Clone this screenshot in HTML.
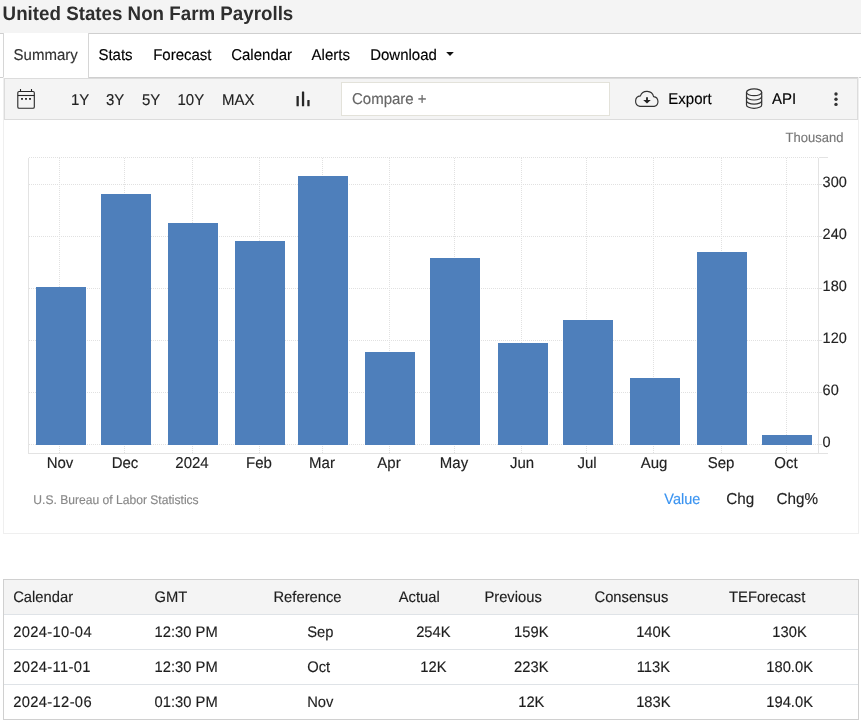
<!DOCTYPE html>
<html><head><meta charset="utf-8">
<style>
html,body{margin:0;padding:0;}
body{width:861px;height:722px;overflow:hidden;position:relative;background:#fff;font-family:"Liberation Sans", sans-serif;}
.t{position:absolute;white-space:nowrap;line-height:1;text-rendering:geometricPrecision;}
#tx{position:absolute;left:0;top:0;width:861px;height:722px;will-change:transform;}
.box{position:absolute;box-sizing:border-box;}
</style></head><body>
<div class="box" style="left:0;top:0;width:861px;height:33px;background:#f4f4f4;"></div><div class="box" style="left:0;top:33px;width:861px;height:1px;background:#cfcfcf;"></div><div class="box" style="left:0;top:77px;width:861px;height:1px;background:#cfcfcf;"></div><div class="box" style="left:3px;top:33px;width:86px;height:45px;background:#fff;border-left:1px solid #d6d6d6;border-right:1px solid #d6d6d6;"></div><div class="box" style="left:3px;top:77px;width:856px;height:457px;border:1px solid #efefef;border-top:none;"></div><div class="box" style="left:4px;top:78px;width:854px;height:42px;background:#f4f4f4;border:1px solid #dcdcdc;"></div><div class="box" style="left:341px;top:82px;width:269px;height:34px;background:#fff;border:1px solid #e3e2da;"></div><div class="box" style="left:3px;top:579px;width:856px;height:141px;border:1px solid #d0d0d0;"></div><div class="box" style="left:4px;top:580px;width:854px;height:34px;background:#f4f4f4;"></div><div class="box" style="left:4px;top:614px;width:854px;height:1px;background:#dfe3e7;"></div><div class="box" style="left:4px;top:649px;width:854px;height:1px;background:#dfe3e7;"></div><div class="box" style="left:4px;top:684px;width:854px;height:1px;background:#dfe3e7;"></div><div id="tx"><div class="t" style="left:2.60px;top:5px;font-size:18.75px;color:#2e2e2e;font-weight:bold;transform:scaleY(1.04);transform-origin:0 15.87px;">United States Non Farm Payrolls</div>
<div class="t" style="left:13.60px;top:48px;font-size:15px;color:#333;-webkit-text-stroke:0.15px #333;transform:scaleY(1.04);transform-origin:0 12.70px;">Summary</div>
<div class="t" style="left:98.40px;top:48px;font-size:15px;color:#000;-webkit-text-stroke:0.15px #000;transform:scaleY(1.04);transform-origin:0 12.70px;">Stats</div>
<div class="t" style="left:153.20px;top:48px;font-size:15px;color:#000;-webkit-text-stroke:0.15px #000;transform:scaleY(1.04);transform-origin:0 12.70px;">Forecast</div>
<div class="t" style="left:231.20px;top:48px;font-size:15px;color:#000;-webkit-text-stroke:0.15px #000;transform:scaleY(1.04);transform-origin:0 12.70px;">Calendar</div>
<div class="t" style="left:311.60px;top:48px;font-size:15px;color:#000;-webkit-text-stroke:0.15px #000;transform:scaleY(1.04);transform-origin:0 12.70px;">Alerts</div>
<div class="t" style="left:370.20px;top:48px;font-size:15px;color:#000;-webkit-text-stroke:0.15px #000;transform:scaleY(1.04);transform-origin:0 12.70px;">Download</div>
<svg class="box" style="left:446px;top:51px" width="9" height="6"><path d="M0.2 1 L7.8 1 L4 4.9 Z" fill="#111"/></svg><div class="t" style="left:71.00px;top:93px;font-size:15px;color:#222;-webkit-text-stroke:0.15px #222;transform:scaleY(1.04);transform-origin:0 12.70px;">1Y</div>
<div class="t" style="left:106.00px;top:93px;font-size:15px;color:#222;-webkit-text-stroke:0.15px #222;transform:scaleY(1.04);transform-origin:0 12.70px;">3Y</div>
<div class="t" style="left:142.00px;top:93px;font-size:15px;color:#222;-webkit-text-stroke:0.15px #222;transform:scaleY(1.04);transform-origin:0 12.70px;">5Y</div>
<div class="t" style="left:177.50px;top:93px;font-size:15px;color:#222;-webkit-text-stroke:0.15px #222;transform:scaleY(1.04);transform-origin:0 12.70px;">10Y</div>
<div class="t" style="left:222.00px;top:93px;font-size:15px;color:#222;-webkit-text-stroke:0.15px #222;transform:scaleY(1.04);transform-origin:0 12.70px;">MAX</div>
<div class="t" style="left:352.00px;top:92px;font-size:15px;color:#666;-webkit-text-stroke:0.15px #666;transform:scaleY(1.04);transform-origin:0 12.70px;">Compare +</div>
<div class="t" style="left:668.30px;top:92px;font-size:15px;color:#000;-webkit-text-stroke:0.15px #000;transform:scaleY(1.04);transform-origin:0 12.70px;">Export</div>
<div class="t" style="left:772.00px;top:92px;font-size:15px;color:#000;-webkit-text-stroke:0.15px #000;transform:scaleY(1.04);transform-origin:0 12.70px;">API</div>
<svg class="box" style="left:0;top:0" width="861" height="130">
<g fill="none" stroke="#262626" stroke-width="1.1">
<rect x="17.8" y="91.5" width="16.5" height="16.7" rx="1.3"/>
<line x1="17.8" y1="95.5" x2="34.3" y2="95.5"/>
<line x1="20.5" y1="89" x2="20.5" y2="91.5"/>
<line x1="31.5" y1="89" x2="31.5" y2="91.5"/>
</g>
<g fill="#222"><rect x="21.1" y="98" width="1.8" height="1.8"/><rect x="25.1" y="98" width="1.8" height="1.8"/><rect x="29.1" y="98" width="1.8" height="1.8"/></g>
<g fill="#262626">
<rect x="296.5" y="96.1" width="2.3" height="10.2" rx="0.5"/>
<rect x="301.9" y="91.4" width="2.3" height="14.9" rx="0.5"/>
<rect x="307.3" y="100" width="2.3" height="6.3" rx="0.5"/>
</g>
<path d="M640 106.4 A5.3 5.3 0 0 1 640.4 95.9 A6.9 6.9 0 0 1 653.6 96.6 A5 5 0 0 1 654.2 106.4 Z" fill="none" stroke="#333" stroke-width="1.15"/>
<path d="M646.1 97.2 H647.9 V100 H650.8 L647 103.4 L643.2 100 H646.1 Z" fill="#222"/>
<g fill="none" stroke="#333" stroke-width="1.2">
<ellipse cx="754.1" cy="92.3" rx="7.6" ry="3.4"/>
<path d="M746.5 92.3 V104.9 A7.6 3.4 0 0 0 761.7 104.9 V92.3"/>
<path d="M746.5 96.6 A7.6 3.4 0 0 0 761.7 96.6"/>
<path d="M746.5 100.7 A7.6 3.4 0 0 0 761.7 100.7"/>
</g>
<g fill="#333"><circle cx="836" cy="94" r="1.7"/><circle cx="836" cy="99.2" r="1.7"/><circle cx="836" cy="104.4" r="1.7"/></g>
</svg><svg class="box" style="left:0;top:0" width="861" height="722">
<g stroke="#e1e1e1" stroke-width="1" stroke-dasharray="1 1">
<line x1="29" y1="157.5" x2="818" y2="157.5"/>
<line x1="29" y1="444.5" x2="818" y2="444.5"/>
<line x1="29" y1="392.5" x2="818" y2="392.5"/>
<line x1="29" y1="340.5" x2="818" y2="340.5"/>
<line x1="29" y1="288.5" x2="818" y2="288.5"/>
<line x1="29" y1="236.5" x2="818" y2="236.5"/>
<line x1="29" y1="184.5" x2="818" y2="184.5"/>
<line x1="59.5" y1="158" x2="59.5" y2="453"/>
<line x1="124.5" y1="158" x2="124.5" y2="453"/>
<line x1="192.5" y1="158" x2="192.5" y2="453"/>
<line x1="259.5" y1="158" x2="259.5" y2="453"/>
<line x1="322.5" y1="158" x2="322.5" y2="453"/>
<line x1="389.5" y1="158" x2="389.5" y2="453"/>
<line x1="454.5" y1="158" x2="454.5" y2="453"/>
<line x1="521.5" y1="158" x2="521.5" y2="453"/>
<line x1="586.5" y1="158" x2="586.5" y2="453"/>
<line x1="653.5" y1="158" x2="653.5" y2="453"/>
<line x1="721.5" y1="158" x2="721.5" y2="453"/>
<line x1="786.5" y1="158" x2="786.5" y2="453"/>
</g>
<g stroke="#e3e3e3" stroke-width="1">
<line x1="28.5" y1="158" x2="28.5" y2="454"/>
<line x1="818.5" y1="158" x2="818.5" y2="454"/>
<line x1="28" y1="453.5" x2="828" y2="453.5"/>
<line x1="819" y1="157.5" x2="828" y2="157.5"/>
<line x1="819" y1="444.5" x2="822" y2="444.5"/>
<line x1="819" y1="392.5" x2="822" y2="392.5"/>
<line x1="819" y1="340.5" x2="822" y2="340.5"/>
<line x1="819" y1="288.5" x2="822" y2="288.5"/>
<line x1="819" y1="236.5" x2="822" y2="236.5"/>
<line x1="819" y1="184.5" x2="822" y2="184.5"/>
</g>
<g fill="#4e7fbb" shape-rendering="crispEdges">
<rect x="36" y="287" width="50" height="158"/>
<rect x="101" y="194" width="50" height="251"/>
<rect x="168" y="223" width="50" height="222"/>
<rect x="235" y="241" width="50" height="204"/>
<rect x="298" y="176" width="50" height="269"/>
<rect x="365" y="352" width="50" height="93"/>
<rect x="430" y="258" width="50" height="187"/>
<rect x="498" y="343" width="50" height="102"/>
<rect x="563" y="320" width="50" height="125"/>
<rect x="630" y="378" width="50" height="67"/>
<rect x="697" y="252" width="50" height="193"/>
<rect x="762" y="435" width="50" height="10"/>
</g>
</svg><div class="t" style="left:822.60px;top:436px;font-size:14.5px;color:#222;-webkit-text-stroke:0.15px #222;transform:scaleY(1.04);transform-origin:0 12.27px;">0</div>
<div class="t" style="left:822.60px;top:384px;font-size:14.5px;color:#222;-webkit-text-stroke:0.15px #222;transform:scaleY(1.04);transform-origin:0 12.27px;">60</div>
<div class="t" style="left:822.60px;top:332px;font-size:14.5px;color:#222;-webkit-text-stroke:0.15px #222;transform:scaleY(1.04);transform-origin:0 12.27px;">120</div>
<div class="t" style="left:822.60px;top:280px;font-size:14.5px;color:#222;-webkit-text-stroke:0.15px #222;transform:scaleY(1.04);transform-origin:0 12.27px;">180</div>
<div class="t" style="left:822.60px;top:228px;font-size:14.5px;color:#222;-webkit-text-stroke:0.15px #222;transform:scaleY(1.04);transform-origin:0 12.27px;">240</div>
<div class="t" style="left:822.60px;top:176px;font-size:14.5px;color:#222;-webkit-text-stroke:0.15px #222;transform:scaleY(1.04);transform-origin:0 12.27px;">300</div>
<div class="t" style="left:785.60px;top:131px;font-size:13px;color:#777;-webkit-text-stroke:0.15px #777;transform:scaleY(1.04);transform-origin:0 11.00px;">Thousand</div>
<div class="t" style="left:-40.00px;width:200px;text-align:center;top:456px;font-size:15px;color:#222;-webkit-text-stroke:0.15px #222;transform:scaleY(1.04);transform-origin:0 12.70px;">Nov</div>
<div class="t" style="left:25.00px;width:200px;text-align:center;top:456px;font-size:15px;color:#222;-webkit-text-stroke:0.15px #222;transform:scaleY(1.04);transform-origin:0 12.70px;">Dec</div>
<div class="t" style="left:92.00px;width:200px;text-align:center;top:456px;font-size:15px;color:#222;-webkit-text-stroke:0.15px #222;transform:scaleY(1.04);transform-origin:0 12.70px;">2024</div>
<div class="t" style="left:159.00px;width:200px;text-align:center;top:456px;font-size:15px;color:#222;-webkit-text-stroke:0.15px #222;transform:scaleY(1.04);transform-origin:0 12.70px;">Feb</div>
<div class="t" style="left:222.00px;width:200px;text-align:center;top:456px;font-size:15px;color:#222;-webkit-text-stroke:0.15px #222;transform:scaleY(1.04);transform-origin:0 12.70px;">Mar</div>
<div class="t" style="left:289.00px;width:200px;text-align:center;top:456px;font-size:15px;color:#222;-webkit-text-stroke:0.15px #222;transform:scaleY(1.04);transform-origin:0 12.70px;">Apr</div>
<div class="t" style="left:354.00px;width:200px;text-align:center;top:456px;font-size:15px;color:#222;-webkit-text-stroke:0.15px #222;transform:scaleY(1.04);transform-origin:0 12.70px;">May</div>
<div class="t" style="left:422.00px;width:200px;text-align:center;top:456px;font-size:15px;color:#222;-webkit-text-stroke:0.15px #222;transform:scaleY(1.04);transform-origin:0 12.70px;">Jun</div>
<div class="t" style="left:487.00px;width:200px;text-align:center;top:456px;font-size:15px;color:#222;-webkit-text-stroke:0.15px #222;transform:scaleY(1.04);transform-origin:0 12.70px;">Jul</div>
<div class="t" style="left:554.00px;width:200px;text-align:center;top:456px;font-size:15px;color:#222;-webkit-text-stroke:0.15px #222;transform:scaleY(1.04);transform-origin:0 12.70px;">Aug</div>
<div class="t" style="left:621.00px;width:200px;text-align:center;top:456px;font-size:15px;color:#222;-webkit-text-stroke:0.15px #222;transform:scaleY(1.04);transform-origin:0 12.70px;">Sep</div>
<div class="t" style="left:686.00px;width:200px;text-align:center;top:456px;font-size:15px;color:#222;-webkit-text-stroke:0.15px #222;transform:scaleY(1.04);transform-origin:0 12.70px;">Oct</div>
<div class="t" style="left:33.30px;top:494px;font-size:12.1px;color:#888;-webkit-text-stroke:0.15px #888;transform:scaleY(1.04);transform-origin:0 10.24px;">U.S. Bureau of Labor Statistics</div>
<div class="t" style="left:664.30px;top:493px;font-size:14.5px;color:#3a93f0;-webkit-text-stroke:0.15px #3a93f0;transform:scaleY(1.04);transform-origin:0 12.27px;">Value</div>
<div class="t" style="left:726.20px;top:492px;font-size:15.25px;color:#222;-webkit-text-stroke:0.15px #222;transform:scaleY(1.04);transform-origin:0 12.91px;">Chg</div>
<div class="t" style="left:776.50px;top:492px;font-size:15.25px;color:#222;-webkit-text-stroke:0.15px #222;transform:scaleY(1.04);transform-origin:0 12.91px;">Chg%</div>
<div class="t" style="left:13.20px;top:591px;font-size:14.75px;color:#1e1e1e;-webkit-text-stroke:0.15px #1e1e1e;transform:scaleY(1.04);transform-origin:0 12.49px;">Calendar</div>
<div class="t" style="left:154.60px;top:591px;font-size:14.75px;color:#1e1e1e;-webkit-text-stroke:0.15px #1e1e1e;transform:scaleY(1.04);transform-origin:0 12.49px;">GMT</div>
<div class="t" style="left:207.50px;width:200px;text-align:center;top:591px;font-size:14.75px;color:#1e1e1e;-webkit-text-stroke:0.15px #1e1e1e;transform:scaleY(1.04);transform-origin:0 12.49px;">Reference</div>
<div class="t" style="left:319.20px;width:200px;text-align:center;top:591px;font-size:14.75px;color:#1e1e1e;-webkit-text-stroke:0.15px #1e1e1e;transform:scaleY(1.04);transform-origin:0 12.49px;">Actual</div>
<div class="t" style="left:413.10px;width:200px;text-align:center;top:591px;font-size:14.75px;color:#1e1e1e;-webkit-text-stroke:0.15px #1e1e1e;transform:scaleY(1.04);transform-origin:0 12.49px;">Previous</div>
<div class="t" style="left:531.40px;width:200px;text-align:center;top:591px;font-size:14.75px;color:#1e1e1e;-webkit-text-stroke:0.15px #1e1e1e;transform:scaleY(1.04);transform-origin:0 12.49px;">Consensus</div>
<div class="t" style="left:667.20px;width:200px;text-align:center;top:591px;font-size:14.75px;color:#1e1e1e;-webkit-text-stroke:0.15px #1e1e1e;transform:scaleY(1.04);transform-origin:0 12.49px;">TEForecast</div>
<div class="t" style="left:13.20px;top:626px;font-size:14.75px;color:#1e1e1e;-webkit-text-stroke:0.15px #1e1e1e;transform:scaleY(1.04);transform-origin:0 12.49px;letter-spacing:0.33px;">2024-10-04</div>
<div class="t" style="left:154.60px;top:626px;font-size:14.75px;color:#1e1e1e;-webkit-text-stroke:0.15px #1e1e1e;transform:scaleY(1.04);transform-origin:0 12.49px;">12:30 PM</div>
<div class="t" style="left:307.20px;top:626px;font-size:14.75px;color:#1e1e1e;-webkit-text-stroke:0.15px #1e1e1e;transform:scaleY(1.04);transform-origin:0 12.49px;">Sep</div>
<div class="t" style="left:333.40px;width:200px;text-align:center;top:626px;font-size:14.75px;color:#1e1e1e;-webkit-text-stroke:0.15px #1e1e1e;transform:scaleY(1.04);transform-origin:0 12.49px;">254K</div>
<div class="t" style="left:431.30px;width:200px;text-align:center;top:626px;font-size:14.75px;color:#1e1e1e;-webkit-text-stroke:0.15px #1e1e1e;transform:scaleY(1.04);transform-origin:0 12.49px;">159K</div>
<div class="t" style="left:553.40px;width:200px;text-align:center;top:626px;font-size:14.75px;color:#1e1e1e;-webkit-text-stroke:0.15px #1e1e1e;transform:scaleY(1.04);transform-origin:0 12.49px;">140K</div>
<div class="t" style="left:689.60px;width:200px;text-align:center;top:626px;font-size:14.75px;color:#1e1e1e;-webkit-text-stroke:0.15px #1e1e1e;transform:scaleY(1.04);transform-origin:0 12.49px;">130K</div>
<div class="t" style="left:13.20px;top:661px;font-size:14.75px;color:#1e1e1e;-webkit-text-stroke:0.15px #1e1e1e;transform:scaleY(1.04);transform-origin:0 12.49px;letter-spacing:0.33px;">2024-11-01</div>
<div class="t" style="left:154.60px;top:661px;font-size:14.75px;color:#1e1e1e;-webkit-text-stroke:0.15px #1e1e1e;transform:scaleY(1.04);transform-origin:0 12.49px;">12:30 PM</div>
<div class="t" style="left:307.20px;top:661px;font-size:14.75px;color:#1e1e1e;-webkit-text-stroke:0.15px #1e1e1e;transform:scaleY(1.04);transform-origin:0 12.49px;">Oct</div>
<div class="t" style="left:333.40px;width:200px;text-align:center;top:661px;font-size:14.75px;color:#1e1e1e;-webkit-text-stroke:0.15px #1e1e1e;transform:scaleY(1.04);transform-origin:0 12.49px;">12K</div>
<div class="t" style="left:431.30px;width:200px;text-align:center;top:661px;font-size:14.75px;color:#1e1e1e;-webkit-text-stroke:0.15px #1e1e1e;transform:scaleY(1.04);transform-origin:0 12.49px;">223K</div>
<div class="t" style="left:553.40px;width:200px;text-align:center;top:661px;font-size:14.75px;color:#1e1e1e;-webkit-text-stroke:0.15px #1e1e1e;transform:scaleY(1.04);transform-origin:0 12.49px;">113K</div>
<div class="t" style="left:689.60px;width:200px;text-align:center;top:661px;font-size:14.75px;color:#1e1e1e;-webkit-text-stroke:0.15px #1e1e1e;transform:scaleY(1.04);transform-origin:0 12.49px;">180.0K</div>
<div class="t" style="left:13.20px;top:696px;font-size:14.75px;color:#1e1e1e;-webkit-text-stroke:0.15px #1e1e1e;transform:scaleY(1.04);transform-origin:0 12.49px;letter-spacing:0.33px;">2024-12-06</div>
<div class="t" style="left:154.60px;top:696px;font-size:14.75px;color:#1e1e1e;-webkit-text-stroke:0.15px #1e1e1e;transform:scaleY(1.04);transform-origin:0 12.49px;">01:30 PM</div>
<div class="t" style="left:307.20px;top:696px;font-size:14.75px;color:#1e1e1e;-webkit-text-stroke:0.15px #1e1e1e;transform:scaleY(1.04);transform-origin:0 12.49px;">Nov</div>
<div class="t" style="left:431.30px;width:200px;text-align:center;top:696px;font-size:14.75px;color:#1e1e1e;-webkit-text-stroke:0.15px #1e1e1e;transform:scaleY(1.04);transform-origin:0 12.49px;">12K</div>
<div class="t" style="left:553.40px;width:200px;text-align:center;top:696px;font-size:14.75px;color:#1e1e1e;-webkit-text-stroke:0.15px #1e1e1e;transform:scaleY(1.04);transform-origin:0 12.49px;">183K</div>
<div class="t" style="left:689.60px;width:200px;text-align:center;top:696px;font-size:14.75px;color:#1e1e1e;-webkit-text-stroke:0.15px #1e1e1e;transform:scaleY(1.04);transform-origin:0 12.49px;">194.0K</div>
</div></body></html>
